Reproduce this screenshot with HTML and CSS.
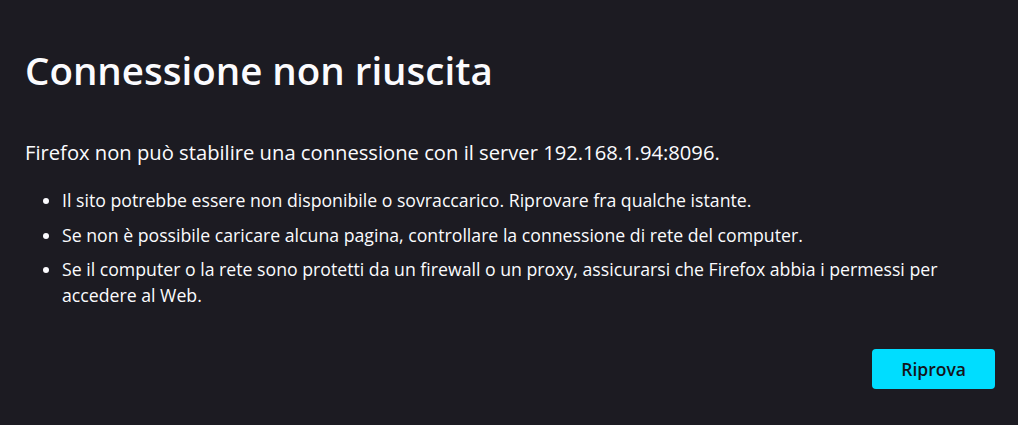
FILE: index.html
```html
<!DOCTYPE html>
<html lang="it">
<head>
    <meta charset="UTF-8">
    <title>Problema di caricamento della pagina</title>
    <link rel="stylesheet" href="styles.css">
</head>
<body>
    <div class="container">
        <h1 class="title">Connessione non riuscita</h1>

        <p class="intro">Firefox non può stabilire una connessione con il server 192.168.1.94:8096.</p>

        <ul class="hints">
            <li>Il sito potrebbe essere non disponibile o sovraccarico. Riprovare fra qualche istante.</li>
            <li>Se non è possibile caricare alcuna pagina, controllare la connessione di rete del computer.</li>
            <li>Se il computer o la rete sono protetti da un firewall o un proxy, assicurarsi che Firefox abbia i permessi per accedere al Web.</li>
        </ul>

        <div class="actions">
            <button class="retry">Riprova</button>
        </div>
    </div>
</body>
</html>
```

FILE: styles.css
```css
html, body {
    margin: 0;
    height: 100%;
}
body {
    background: #1c1b22;
    color: #fbfbfe;
    font-family: "Open Sans", "Noto Sans", sans-serif;
}
.container {
    padding: 40px 23px 0 25px;
}
.title {
    font-size: 38.5px;
    font-weight: 600;
    line-height: 60px;
    margin: 0 0 38px;
}
.intro {
    font-size: 20.2px;
    margin: 0 0 21px;
    line-height: 28px;
}
.hints {
    max-width: 915px;
    margin: 0;
    padding-left: 37px;
    font-size: 17.7px;
    line-height: 26px;
}
.hints li {
    margin-bottom: 8.5px;
}
.hints li:last-child {
    margin-bottom: 0;
}
.actions {
    display: flex;
    justify-content: flex-end;
    margin-top: 41px;
}
.retry {
    background: #00ddff;
    color: #15141a;
    border: none;
    border-radius: 4px;
    padding: 0 29px;
    height: 40px;
    font-family: inherit;
    font-size: 17.5px;
    font-weight: 600;
    cursor: pointer;
}
```
